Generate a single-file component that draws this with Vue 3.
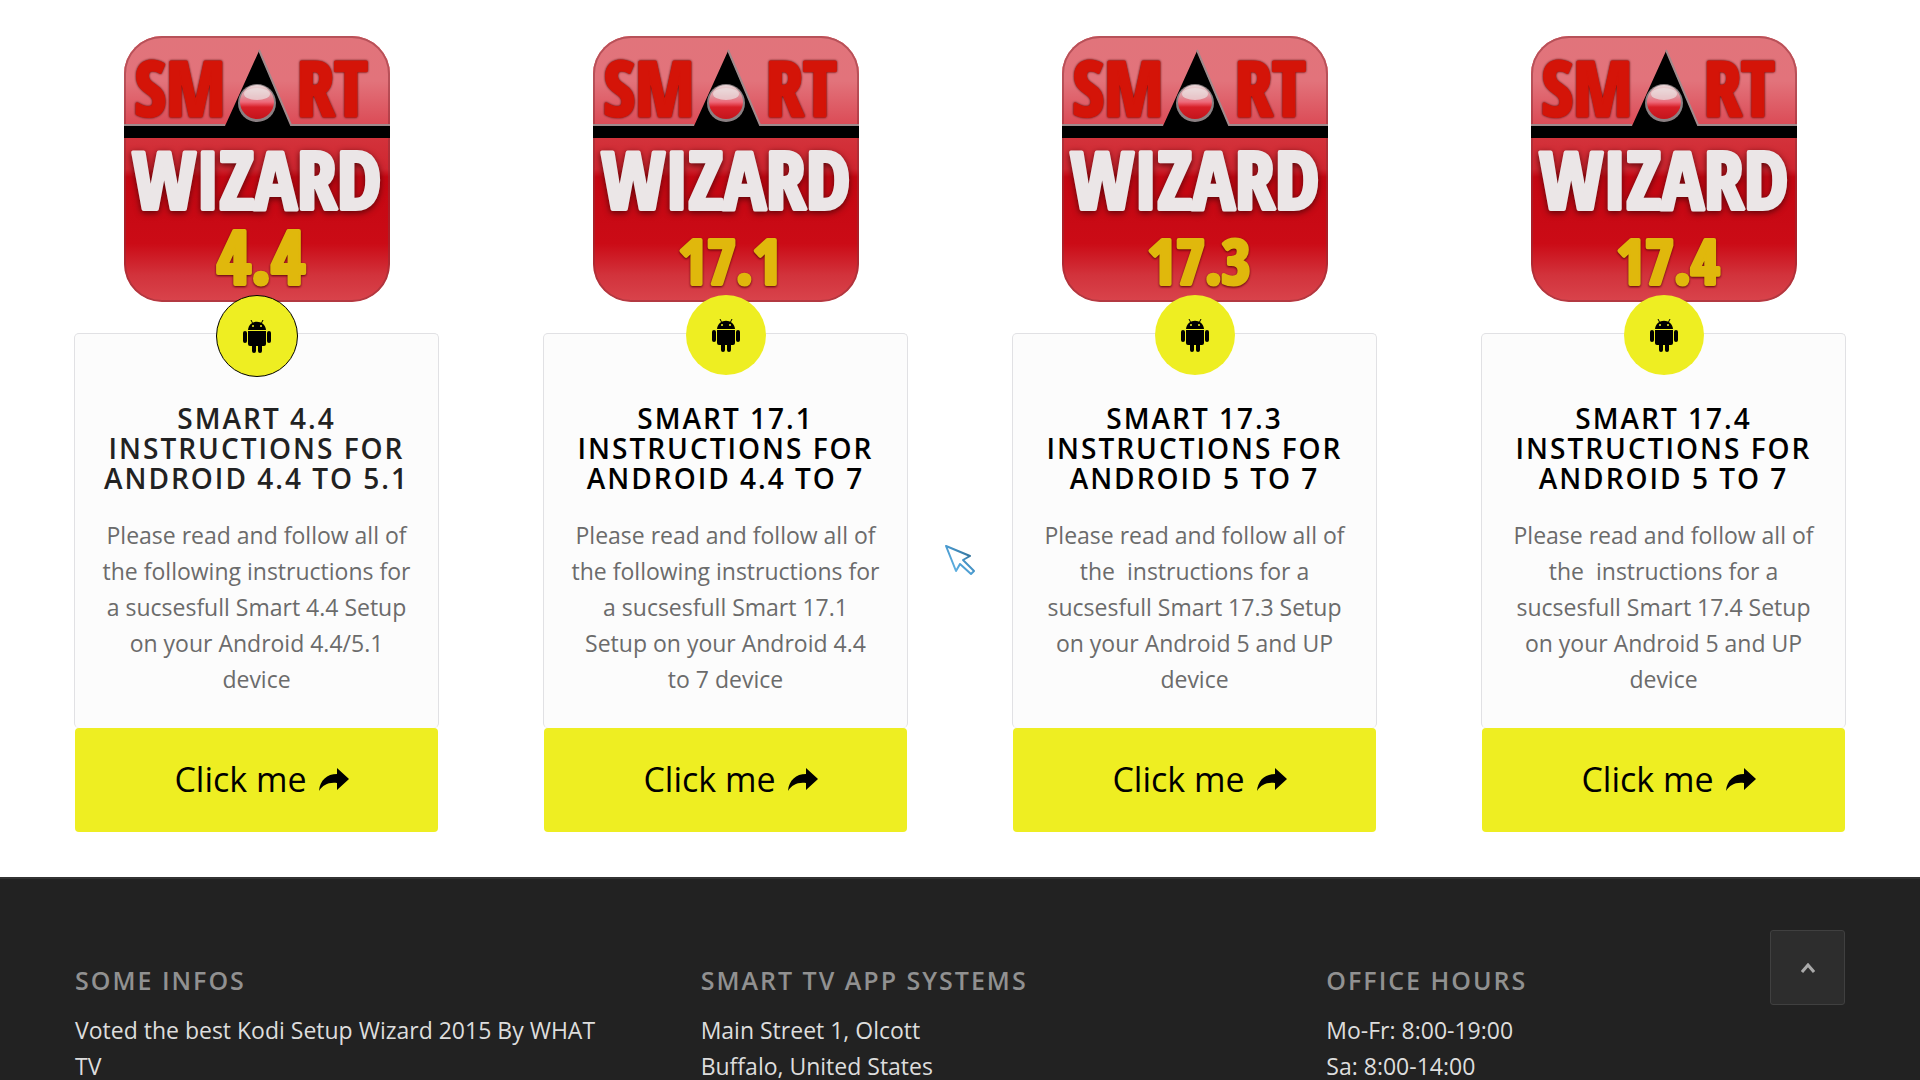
<template>
  <div class="page">
    <main class="cards">
      <article v-for="(item, index) in wizards" :key="item.version" class="wizard">
        <svg class="logo" viewBox="0 0 266 266" role="img" :aria-label="'Smart Wizard ' + item.version">
          <defs>
            <linearGradient :id="'top' + index" x1="0" y1="0" x2="0" y2="1">
              <stop offset="0" stop-color="#e1747b" />
              <stop offset="0.5" stop-color="#e2737b" />
              <stop offset="1" stop-color="#db4a55" />
            </linearGradient>
            <linearGradient :id="'base' + index" x1="0" y1="0" x2="0" y2="1">
              <stop offset="0.36" stop-color="#d4353d" />
              <stop offset="0.5" stop-color="#cf2630" />
              <stop offset="0.53" stop-color="#c40712" />
              <stop offset="0.78" stop-color="#cb0b16" />
              <stop offset="0.9" stop-color="#d2333c" />
              <stop offset="1" stop-color="#d9444c" />
            </linearGradient>
            <linearGradient :id="'orb' + index" x1="0" y1="0" x2="0" y2="1">
              <stop offset="0" stop-color="#ead9da" />
              <stop offset="0.35" stop-color="#df8d97" />
              <stop offset="0.5" stop-color="#ee6a7a" />
              <stop offset="0.65" stop-color="#d81f28" />
              <stop offset="1" stop-color="#c3141b" />
            </linearGradient>
            <clipPath :id="'clip' + index">
              <rect width="266" height="266" rx="38" />
            </clipPath>
          </defs>
          <g :clip-path="`url(#clip${index})`">
            <rect width="266" height="266" :fill="`url(#base${index})`" />
            <rect width="266" height="90" :fill="`url(#top${index})`" />
            <rect x="1" y="1" width="264" height="264" rx="37" class="logo-edge" />
            <path d="M0 90H101L135 15L167 90H266V102H0Z" fill="#000" />
            <path d="M0 89H101M135 14L167 89H266" class="logo-rim" />
          </g>
          <circle cx="133" cy="67" r="19" fill="#8a8083" />
          <circle cx="133" cy="66" r="17" :fill="`url(#orb${index})`" />
          <ellipse cx="133" cy="58" rx="13" ry="6" fill="#ece6e6" opacity="0.65" />
          <text x="56" y="80" class="smart">SM</text>
          <text x="208" y="80" class="smart">RT</text>
          <text x="133" y="173" class="word">WIZARD</text>
          <text x="137" y="248" class="version" :class="{ large: index === 0 }">{{ item.version }}</text>
        </svg>

        <section class="card">
          <span class="badge" :class="{ active: index === 0 }">
            <svg viewBox="0 0 28 33" width="28" height="33" aria-hidden="true">
              <path d="M8 0L10 4M20 0L18 4" stroke="#000" stroke-width="1" />
              <path d="M5 10C6 -1 22 -1 23 10Z" />
              <circle cx="10" cy="6" r="1" fill="#eeee22" />
              <circle cx="18" cy="6" r="1" fill="#eeee22" />
              <rect x="0" y="11" width="4" height="12" rx="2" />
              <rect x="24" y="11" width="4" height="12" rx="2" />
              <path d="M5 11H23V24Q23 26 21 26H19V31Q19 33 17 33T15 31V26H13V31Q13 33 11 33T9 31V26H7Q5 26 5 24Z" />
            </svg>
          </span>
          <h2 :class="{ active: index === 0 }">{{ item.title }}</h2>
          <p>{{ item.text }}</p>
        </section>

        <a href="#" class="click-me">
          Click me
          <svg viewBox="0 0 30 23" width="30" height="23" aria-hidden="true">
            <path d="M18 0L30 11L18 22V15C9 14 4 17 0 23C1 12 8 6 18 6Z" />
          </svg>
        </a>
      </article>
    </main>

    <footer class="footer">
      <section v-for="column in footerColumns" :key="column.title">
        <h3>{{ column.title }}</h3>
        <p v-for="line in column.lines" :key="line">{{ line }}</p>
      </section>
    </footer>

    <button type="button" class="to-top" aria-label="Scroll to top" @click="scrollToTop">
      <svg viewBox="0 0 14 10" width="14" height="10" aria-hidden="true">
        <path d="M1 9L7 2L13 9" />
      </svg>
    </button>

    <svg class="pointer" viewBox="0 0 32 32" width="32" height="32" aria-hidden="true">
      <defs>
        <linearGradient id="pointerLine" x1="0" y1="1" x2="1" y2="0">
          <stop offset="0" stop-color="#6fc0ec" />
          <stop offset="0.5" stop-color="#4a9bd0" />
          <stop offset="1" stop-color="#20506e" />
        </linearGradient>
      </defs>
      <path d="M2 2L26 12L19 16L30 27L27 30L16 20L12 27Z" />
    </svg>
  </div>
</template>

<script setup>
import { ref } from "vue";

const wizards = ref([
  {
    version: "4.4",
    title: "Smart 4.4 Instructions for Android 4.4 to 5.1",
    text: "Please read and follow all of the following instructions for a sucsesfull Smart 4.4 Setup on your Android 4.4/5.1 device",
  },
  {
    version: "17.1",
    title: "Smart 17.1 Instructions for Android 4.4 to 7",
    text: "Please read and follow all of the following instructions for a sucsesfull Smart 17.1 Setup on your Android 4.4 to\u00a07 device",
  },
  {
    version: "17.3",
    title: "Smart 17.3 Instructions for Android 5 to 7",
    text: "Please read and follow all of the \u00a0instructions for a sucsesfull Smart 17.3 Setup on your Android 5 and UP device",
  },
  {
    version: "17.4",
    title: "Smart 17.4 Instructions for Android 5 to 7",
    text: "Please read and follow all of the \u00a0instructions for a sucsesfull Smart 17.4 Setup on your Android 5 and UP device",
  },
]);

const footerColumns = [
  {
    title: "Some Infos",
    lines: ["Voted the best Kodi Setup Wizard 2015 By WHAT TV"],
  },
  {
    title: "Smart TV App Systems",
    lines: ["Main Street 1, Olcott", "Buffalo, United States"],
  },
  {
    title: "Office Hours",
    lines: ["Mo-Fr: 8:00-19:00", "Sa: 8:00-14:00"],
  },
];

const scrollToTop = () => {
  window.scrollTo({ top: 0, behavior: "smooth" });
};
</script>

<style>
body {
  margin: 0;
  background: #fff;
}
</style>

<style scoped>
.page {
  display: flex;
  flex-direction: column;
  min-height: 100vh;
  font-family: "Open Sans", "Noto Sans", sans-serif;
  font-size: 23px;
  line-height: 36px;
}

.cards {
  display: grid;
  grid-template-columns: repeat(4, 1fr);
  gap: 104px;
  padding: 36px 74px 45px;
}

.wizard {
  display: flex;
  flex-direction: column;
  align-items: center;
}

.logo {
  width: 266px;
  height: 266px;
  overflow: visible;
}

.logo-edge {
  fill: none;
  stroke: #8d3038;
  stroke-width: 2;
  opacity: 0.5;
}

.logo-rim {
  fill: none;
  stroke: #a08a8c;
  stroke-width: 2;
}

.logo text {
  font-family: "Open Sans Condensed", "Roboto Condensed", "Liberation Sans Narrow", "DejaVu Sans Condensed", sans-serif;
  font-weight: 800;
  text-anchor: middle;
  paint-order: stroke;
  stroke-linejoin: round;
}

.smart {
  font-size: 76px;
  fill: #d41408;
  stroke: #d41408;
  stroke-width: 3;
  filter: drop-shadow(0 0 1px #4a0808);
}

.word {
  font-size: 80px;
  fill: #ebe6e7;
  stroke: #ebe6e7;
  stroke-width: 4;
  filter: drop-shadow(0 2px 3px #5c0509);
}

.version {
  font-size: 62px;
  fill: #e0b80c;
  stroke: #e0b80c;
  stroke-width: 4;
  filter: drop-shadow(0 1px 1px #5c0509);
}

.version.large {
  font-size: 74px;
}

.card {
  position: relative;
  box-sizing: border-box;
  width: 100%;
  margin-top: 31px;
  padding: 69px 26px 31px;
  border: 1px solid #e1e1e4;
  border-bottom: 0;
  border-radius: 5px;
  background: #fcfcfc;
  text-align: center;
}

.badge {
  position: absolute;
  top: -39px;
  left: 50%;
  display: flex;
  align-items: center;
  justify-content: center;
  width: 80px;
  height: 80px;
  border-radius: 50%;
  background: #eeee22;
  transform: translateX(-50%);
}

.badge.active {
  border: 1px solid #000;
}

h2 {
  margin: 0;
  color: #000;
  font-size: 28px;
  font-weight: 600;
  line-height: 30px;
  letter-spacing: 2px;
  text-transform: uppercase;
}

h2.active {
  color: #222;
}

.card p {
  margin: 24px 0 0;
  color: #6b6b6b;
}

.click-me {
  display: flex;
  align-items: center;
  justify-content: center;
  gap: 12px;
  box-sizing: border-box;
  width: calc(100% - 2px);
  height: 104px;
  padding: 0 0 2px 10px;
  border-radius: 4px;
  background: #eeee22;
  color: #000;
  font-size: 34px;
  text-decoration: none;
}

.footer {
  display: grid;
  flex: 1;
  grid-template-columns: repeat(3, 1fr);
  gap: 103px;
  padding: 83px 71px 0 75px;
  border-top: 2px solid #333;
  background: #222;
  color: #ddd;
}

h3 {
  margin: 0 0 14px;
  color: #919191;
  font-size: 25px;
  font-weight: 600;
  line-height: 36px;
  letter-spacing: 2px;
  text-transform: uppercase;
}

.footer p {
  margin: 0;
}

.to-top {
  position: fixed;
  right: 75px;
  bottom: 75px;
  display: flex;
  align-items: center;
  justify-content: center;
  width: 75px;
  height: 75px;
  border: 1px solid #404040;
  border-radius: 3px;
  background: #2d2d2d;
  cursor: pointer;
}

.to-top path {
  fill: none;
  stroke: #aaa;
  stroke-width: 3;
}

.pointer {
  position: absolute;
  top: 544px;
  left: 944px;
  pointer-events: none;
}

.pointer path {
  fill: #fff;
  stroke: url(#pointerLine);
  stroke-width: 2;
  stroke-linejoin: round;
}
</style>
